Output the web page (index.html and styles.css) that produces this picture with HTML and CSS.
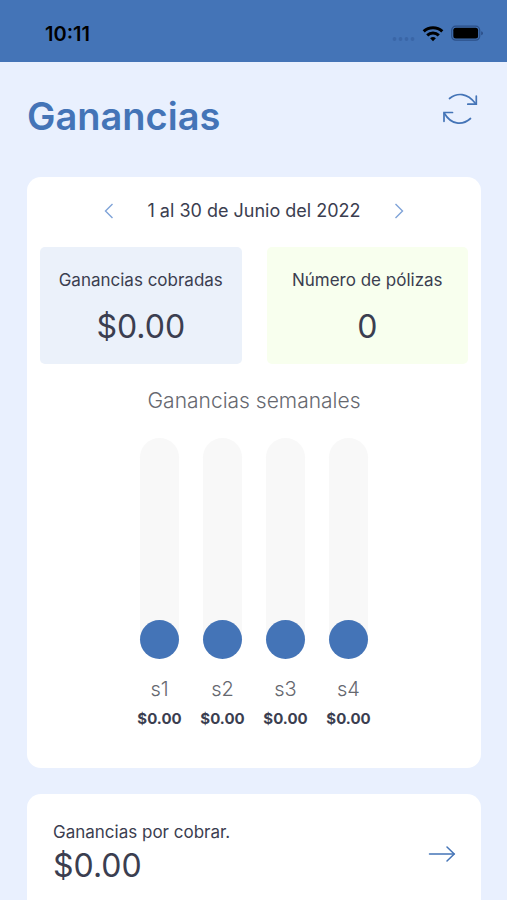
FILE: index.html
```
<!DOCTYPE html>
<html lang="es">
<head>
    <meta charset="UTF-8">
    <meta name="viewport" content="width=device-width, initial-scale=1.0">
    <title>Ganancias</title>
    <link rel="stylesheet" href="styles.css">
</head>
<body>
    <div class="status-bar">
        <span class="status-time">10:11</span>
        <div class="status-icons">
            <svg width="23" height="18" viewBox="0 0 23 18" fill="#3a66a7">
                <circle cx="2.500" cy="14" r="1.900"/>
                <circle cx="8.500" cy="14" r="1.900"/>
                <circle cx="14.500" cy="14" r="1.900"/>
                <circle cx="20.500" cy="14" r="1.900"/>
            </svg>
            <svg width="22" height="18" viewBox="0 0 22 18" fill="none" stroke="#000" stroke-width="3">
                <path d="M1.700 6.400a13.400 13.400 0 0 1 18.600 0"/>
                <path d="M5.200 10.300a8.400 8.400 0 0 1 11.600 0"/>
                <path d="M11 16.200l-2.900-3a4.300 4.300 0 0 1 5.800 0z" fill="#000" stroke="none"/>
            </svg>
            <svg width="33" height="18" viewBox="0 0 33 18">
                <rect x="0.700" y="1.200" width="28" height="14" rx="4" fill="none" stroke="#2b4f88" stroke-width="1.200"/>
                <rect x="2.300" y="2.800" width="24.800" height="10.800" rx="2.500" fill="#000"/>
                <path d="M30.200 6.300v4q1.800-.6 1.800-2t-1.800-2z" fill="#2b4f88"/>
            </svg>
        </div>
    </div>

    <header class="page-header">
        <h1>Ganancias</h1>
        <button class="icon-btn" type="button" aria-label="Actualizar">
            <svg width="36" height="34" viewBox="0 0 36 34" fill="none" stroke="#4474b7" stroke-width="1.700" stroke-linecap="round">
                <path d="M7.500 6.500C15 .5 25 .5 33.500 11.500"/>
                <path d="M34.300 4v8.200h-8.500"/>
                <path d="M28.500 26.500C20 34 9 32.500 2.500 21.500"/>
                <path d="M2 29.300v-8.800h8.500"/>
            </svg>
        </button>
    </header>

    <main>
        <section class="card">
            <div class="period">
                <button class="icon-btn" type="button" aria-label="Periodo anterior">
                    <svg width="10" height="16" viewBox="0 0 10 16" fill="none" stroke="#7fa3d8" stroke-width="1.400">
                        <path d="M8.500 1L1.500 8l7 7"/>
                    </svg>
                </button>
                <span class="period-label">1 al 30 de Junio del 2022</span>
                <button class="icon-btn" type="button" aria-label="Periodo siguiente">
                    <svg width="10" height="16" viewBox="0 0 10 16" fill="none" stroke="#7fa3d8" stroke-width="1.400">
                        <path d="M1.500 1l7 7-7 7"/>
                    </svg>
                </button>
            </div>

            <div class="stats">
                <div class="stat stat-blue">
                    <span class="stat-label">Ganancias cobradas</span>
                    <span class="amount">$0.00</span>
                </div>
                <div class="stat stat-green">
                    <span class="stat-label">Número de pólizas</span>
                    <span class="amount">0</span>
                </div>
            </div>

            <h2>Ganancias semanales</h2>

            <div class="chart">
                <div class="week">
                    <div class="bar"><div class="bar-fill" style="height: 0%"></div></div>
                    <span class="week-name">s1</span>
                    <span class="week-amount">$0.00</span>
                </div>
                <div class="week">
                    <div class="bar"><div class="bar-fill" style="height: 0%"></div></div>
                    <span class="week-name">s2</span>
                    <span class="week-amount">$0.00</span>
                </div>
                <div class="week">
                    <div class="bar"><div class="bar-fill" style="height: 0%"></div></div>
                    <span class="week-name">s3</span>
                    <span class="week-amount">$0.00</span>
                </div>
                <div class="week">
                    <div class="bar"><div class="bar-fill" style="height: 0%"></div></div>
                    <span class="week-name">s4</span>
                    <span class="week-amount">$0.00</span>
                </div>
            </div>
        </section>

        <a class="card pending" href="#">
            <div class="pending-text">
                <span class="stat-label">Ganancias por cobrar.</span>
                <span class="amount">$0.00</span>
            </div>
            <svg width="28" height="18" viewBox="0 0 28 18" fill="none" stroke="#4474b7" stroke-width="1.500" stroke-linecap="round">
                <path d="M1.500 9H26"/>
                <path d="M19 2l7.200 7-7.200 7"/>
            </svg>
        </a>
    </main>
</body>
</html>
```
FILE: styles.css
```
* {
    box-sizing: border-box;
}

body {
    font-family: Inter, 'Open Sans', sans-serif;
    margin: 0;
    height: 100vh;
    overflow: hidden;
    background-color: #e9f0fe;
    color: #3b3e50;
}

h1, h2 {
    margin: 0;
}

.status-bar {
    display: flex;
    justify-content: space-between;
    align-items: center;
    height: 62px;
    padding: 5px 23px 0 45px;
    background-color: #4474b7;
}

.status-time {
    font-size: 20px;
    font-weight: 600;
    line-height: 24px;
    color: #000;
}

.status-icons {
    display: flex;
    align-items: center;
    gap: 7px;
}

.page-header {
    display: flex;
    justify-content: space-between;
    align-items: flex-start;
    padding: 30px 29px 37px 27px;
}

h1 {
    font-size: 38px;
    font-weight: 600;
    line-height: 48px;
    color: #4474b7;
}

.icon-btn {
    display: flex;
    padding: 0;
    border: none;
    background: none;
    cursor: pointer;
}

main {
    display: flex;
    flex-direction: column;
    gap: 26px;
    padding: 0 26px 0 27px;
}

.card {
    padding: 20px 13px 37px;
    border-radius: 14px;
    background-color: #fff;
}

.period {
    display: flex;
    justify-content: center;
    align-items: center;
    gap: 33px;
}

.period-label {
    font-size: 18px;
    font-weight: 400;
    line-height: 28px;
}

.stats {
    display: flex;
    gap: 25px;
    margin-top: 22px;
}

.stat {
    display: flex;
    flex: 1;
    flex-direction: column;
    align-items: center;
    gap: 14px;
    height: 117px;
    padding-top: 21px;
    border-radius: 5px;
}

.stat-blue {
    background-color: #ebf1fa;
}

.stat-green {
    background-color: #f8ffee;
}

.stat-label {
    font-size: 17px;
    font-weight: 400;
    line-height: 24px;
}

.amount {
    font-size: 32px;
    line-height: 42px;
}

h2 {
    margin-top: 23px;
    font-size: 21px;
    font-weight: 300;
    line-height: 28px;
    text-align: center;
    color: #66686f;
}

.chart {
    display: flex;
    justify-content: center;
    gap: 17px;
    margin-top: 23px;
}

.week {
    display: flex;
    flex-direction: column;
    align-items: center;
    width: 46px;
}

.bar {
    display: flex;
    align-items: flex-end;
    width: 39px;
    height: 221px;
    border-radius: 20px;
    background-color: #f8f8f8;
}

.bar-fill {
    width: 100%;
    min-height: 39px;
    border-radius: 20px;
    background-color: #4474b7;
}

.week-name {
    margin-top: 16px;
    font-size: 20px;
    font-weight: 300;
    line-height: 28px;
    color: #66686f;
}

.week-amount {
    margin-top: 4px;
    font-size: 15px;
    font-weight: 700;
    line-height: 24px;
}

.pending {
    display: flex;
    justify-content: space-between;
    align-items: center;
    padding: 26px 25px 26px 26px;
    color: inherit;
    text-decoration: none;
}

.pending-text {
    display: flex;
    flex-direction: column;
    gap: 1px;
}
```
